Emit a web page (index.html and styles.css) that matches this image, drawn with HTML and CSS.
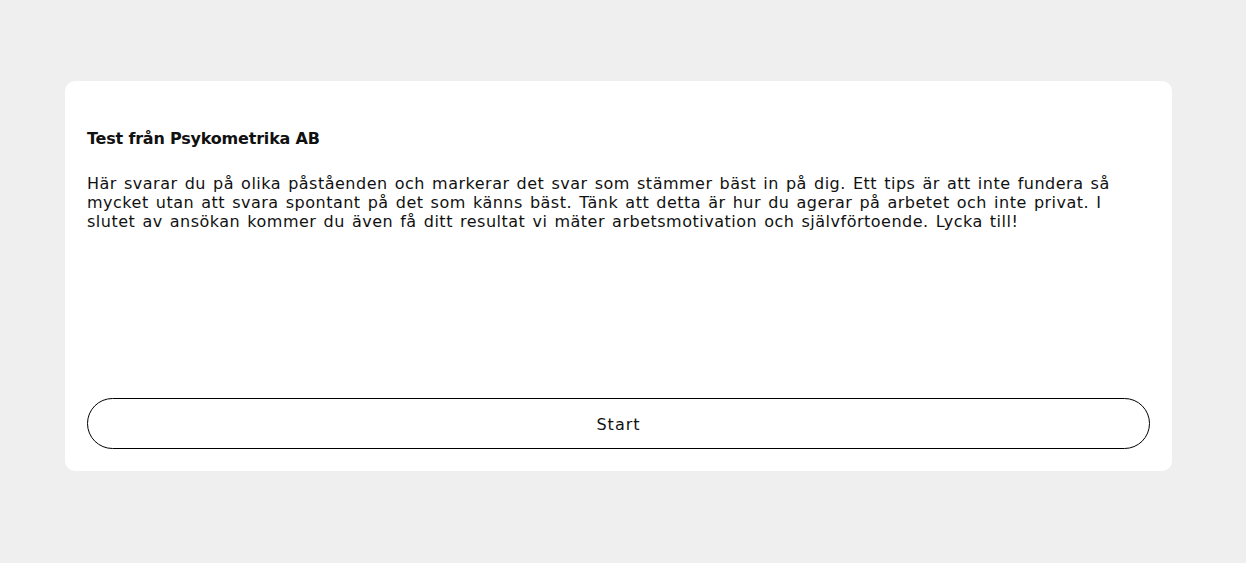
FILE: index.html
```html
<!DOCTYPE html>
<html lang="sv">
<head>
<meta charset="utf-8">
<title>Test från Psykometrika AB</title>
<link rel="stylesheet" href="styles.css">
</head>
<body>
<main class="page">
  <section class="card">
    <h1 class="title">Test från Psykometrika AB</h1>
    <p class="intro">Här svarar du på olika påståenden och markerar det svar som stämmer bäst in på dig. Ett tips är att inte fundera så mycket utan att svara spontant på det som känns bäst. Tänk att detta är hur du agerar på arbetet och inte privat. I slutet av ansökan kommer du även få ditt resultat vi mäter arbetsmotivation och självförtoende. Lycka till!</p>
    <button class="start" type="button">Start</button>
  </section>
</main>
</body>
</html>
```
FILE: styles.css
```css
html, body {
  margin: 0;
  padding: 0;
  background: #efefef;
}
body {
  font-family: "DejaVu Sans", sans-serif;
  color: #111;
}
.page {
  padding: 81px 74px 0 65px;
}
.card {
  box-sizing: border-box;
  width: 1107px;
  height: 390px;
  background: #fff;
  border-radius: 10px;
  padding: 22px;
  display: flex;
  flex-direction: column;
}
.title {
  margin: 26px 0 0;
  font-size: 16px;
  line-height: 19px;
  font-weight: 700;
  letter-spacing: -0.2px;
}
.intro {
  margin: 26px 0 0;
  font-size: 16px;
  line-height: 19px;
  font-weight: 400;
  letter-spacing: 0.5px;
  word-spacing: 1.5px;
}
.start {
  margin-top: auto;
  height: 51px;
  width: 100%;
  border: 1px solid #000;
  border-radius: 26px;
  background: #fff;
  font-family: inherit;
  font-size: 16px;
  font-weight: 500;
  color: #111;
  letter-spacing: 1px;
  padding: 2px 0 0;
  cursor: pointer;
}
```
